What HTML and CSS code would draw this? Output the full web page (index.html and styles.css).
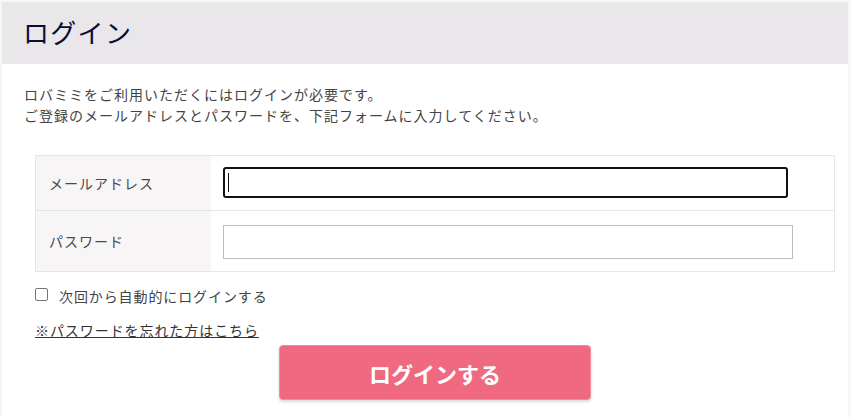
FILE: index.html
```html
<!DOCTYPE html>
<html lang="ja">
<head>
<meta charset="utf-8">
<title>ログイン</title>
<link rel="stylesheet" href="styles.css">
</head>
<body>
<div class="page">
  <header class="page-head">
    <h1 class="page-title">ログイン</h1>
  </header>
  <div class="content">
    <p class="intro">ロバミミをご利用いただくにはログインが必要です。<br>ご登録のメールアドレスとパスワードを、下記フォームに入力してください。</p>
    <form class="login-form">
      <div class="fields">
        <div class="field-row row-mail">
          <label class="field-label" for="mail">メールアドレス</label>
          <div class="field-cell"><span class="input-wrap"><input class="field-input input-focus" id="mail" type="text"><span class="caret"></span></span></div>
        </div>
        <div class="field-row row-pass">
          <label class="field-label" for="pass">パスワード</label>
          <div class="field-cell"><input class="field-input input-pass" id="pass" type="password"></div>
        </div>
      </div>
      <label class="remember"><span class="checkbox"></span>次回から自動的にログインする</label>
      <a class="forgot" href="#">※パスワードを忘れた方はこちら</a>
      <div class="submit-wrap"><button class="submit" type="button">ログインする</button></div>
    </form>
  </div>
</div>
</body>
</html>
```

FILE: styles.css
```css
* { box-sizing: border-box; }
html, body { margin: 0; padding: 0; }
body {
  background: #f6f6f6;
  font-family: "Noto Sans CJK JP", "Noto Sans", sans-serif;
  color: #444;
  padding: 2px 3px 0 2px;
  height: 417px;
  overflow: hidden;
}
.page {
  background: #fff;
  width: 846px;
  height: 415px;
}
.page-head {
  background: #e9e7ea;
  height: 62px;
  padding-left: 21px;
  display: flex;
  align-items: center;
}
.page-title {
  margin: 0;
  font-size: 26px;
  font-weight: normal;
  color: #0b0b3a;
  line-height: 1;
  letter-spacing: 1.3px;
  position: relative;
  top: -1px;
}
.content {
  padding: 20px 0 0 22px;
}
.intro {
  margin: 0;
  font-size: 14px;
  line-height: 21px;
  letter-spacing: 1px;
  color: #444;
}
.login-form {
  margin: 29px 0 0 11px;
  width: 800px;
}
.fields {
  border: 1px solid #e6e6e6;
}
.field-row {
  display: flex;
}
.row-mail { height: 55px; border-bottom: 1px solid #e6e6e6; }
.row-pass { height: 60px; }
.field-label {
  width: 175px;
  background: #f7f5f6;
  padding-left: 13px;
  display: flex;
  align-items: center;
  font-size: 14px;
  letter-spacing: 1px;
  color: #4a4a4a;
}
.field-cell {
  flex: 1;
  padding-left: 12px;
  display: flex;
  align-items: center;
}
.input-wrap {
  position: relative;
  display: block;
  top: -1px;
}
.field-input {
  font: inherit;
  margin: 0;
  background: #fff;
  display: block;
}
.input-focus {
  width: 565px;
  height: 31px;
  border: 2px solid #111;
  border-radius: 3px;
  outline: none;
  caret-color: transparent;
}
.caret {
  position: absolute;
  left: 5px;
  top: 6px;
  width: 1px;
  height: 19px;
  background: #111;
}
.input-pass {
  width: 570px;
  height: 34px;
  border: 1px solid #bdbdbd;
  border-radius: 0;
  position: relative;
  top: 1px;
}
.remember {
  display: flex;
  align-items: center;
  margin-top: 14px;
  font-size: 14px;
  letter-spacing: 0.9px;
  color: #444;
  height: 20px;
}
.checkbox {
  width: 13px;
  height: 13px;
  border: 1px solid #767676;
  border-radius: 2px;
  margin: 0 11px 0 0;
  background: #fff;
  position: relative;
  top: -2px;
}
.forgot {
  display: inline-block;
  margin-top: 14px;
  font-size: 14px;
  letter-spacing: 0.93px;
  color: #333;
  text-decoration: underline;
  line-height: 20px;
}
.submit-wrap {
  display: flex;
  justify-content: center;
  margin-top: 4px;
}
.submit {
  width: 312px;
  height: 55px;
  background: #ef6a80;
  border: 1px solid #f28a9b;
  border-radius: 4px;
  box-shadow: 0 2px 3px rgba(0,0,0,0.15);
  color: #fff;
  font-family: inherit;
  font-size: 22px;
  font-weight: bold;
  cursor: pointer;
}
```
